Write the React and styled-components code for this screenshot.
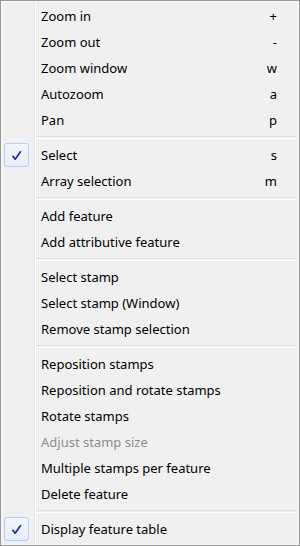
import React from 'react';
import styled, { createGlobalStyle } from 'styled-components';

const GlobalStyle = createGlobalStyle`
	body {
		margin: 0;
		background: #ffffff;
		font-family: 'Segoe UI', 'Noto Sans', sans-serif;
	}
`;

const StyledMenu = styled.div`
	box-sizing: border-box;
	width: 300px;
	height: 546px;
	border: 1px solid #979797;
	background: #f5f5f5;
	padding: 2px 2px 1px 2px;
	display: flex;
	flex-direction: column;
`;

const StyledList = styled.ul`
	list-style: none;
	margin: 0;
	padding: 0;
	flex: 1;
	display: flex;
	flex-direction: column;
	background: linear-gradient(
		to right,
		#f0f0f0 31px,
		#e2e3e3 31px,
		#e2e3e3 32px,
		#ffffff 32px,
		#ffffff 33px,
		#f0f0f0 33px
	);
`;

const StyledItem = styled.li`
	display: flex;
	align-items: center;
	height: 26px;
	font-size: 13px;
	color: ${(props) => (props.disabled ? '#8d8d8d' : '#000000')};
`;

const StyledGutter = styled.span`
	width: 38px;
	height: 26px;
	display: flex;
	align-items: center;
	padding-left: 1px;
	box-sizing: border-box;
`;

const StyledCheck = styled.span`
	box-sizing: border-box;
	width: 25px;
	height: 24px;
	border: 1px solid #aecff7;
	border-radius: 3px;
	background: linear-gradient(#f2f7fd, #e4eefb);
	display: flex;
	align-items: center;
	justify-content: center;
`;

const StyledLabel = styled.span`
	flex: 1;
`;

const StyledShortcut = styled.span`
	padding-right: 20px;
`;

const StyledSeparator = styled.li`
	height: 9px;
	display: flex;
	align-items: center;
	padding-left: 33px;
	&::after {
		content: '';
		flex: 1;
		height: 1px;
		border-top: 1px solid #e0e0e0;
		border-bottom: 1px solid #ffffff;
	}
`;

const groups = [
	[
		{ label: 'Zoom in', key: '+' },
		{ label: 'Zoom out', key: '-' },
		{ label: 'Zoom window', key: 'w' },
		{ label: 'Autozoom', key: 'a' },
		{ label: 'Pan', key: 'p' },
	],
	[
		{ label: 'Select', key: 's', checked: true },
		{ label: 'Array selection', key: 'm' },
	],
	[{ label: 'Add feature' }, { label: 'Add attributive feature' }],
	[
		{ label: 'Select stamp' },
		{ label: 'Select stamp (Window)' },
		{ label: 'Remove stamp selection' },
	],
	[
		{ label: 'Reposition stamps' },
		{ label: 'Reposition and rotate stamps' },
		{ label: 'Rotate stamps' },
		{ label: 'Adjust stamp size', disabled: true },
		{ label: 'Multiple stamps per feature' },
		{ label: 'Delete feature' },
	],
	[{ label: 'Display feature table', checked: true }],
];

function CheckMark() {
	return (
		<svg width='11' height='11' viewBox='0 0 11 11'>
			<path
				d='M1.5 5.8 L4.2 9.2 L9.8 1.2'
				fill='none'
				stroke='#1d2aa8'
				strokeWidth='1.7'
				strokeLinejoin='round'
			/>
		</svg>
	);
}

export default function App() {
	return (
		<>
			<GlobalStyle />
			<StyledMenu>
				<StyledList>
					{groups.map((group, gi) => (
						<React.Fragment key={gi}>
							{gi > 0 && <StyledSeparator />}
							{group.map((item) => (
								<StyledItem key={item.label} disabled={item.disabled}>
									<StyledGutter>
										{item.checked && (
											<StyledCheck>
												<CheckMark />
											</StyledCheck>
										)}
									</StyledGutter>
									<StyledLabel>{item.label}</StyledLabel>
									{item.key && <StyledShortcut>{item.key}</StyledShortcut>}
								</StyledItem>
							))}
						</React.Fragment>
					))}
				</StyledList>
			</StyledMenu>
		</>
	);
}
